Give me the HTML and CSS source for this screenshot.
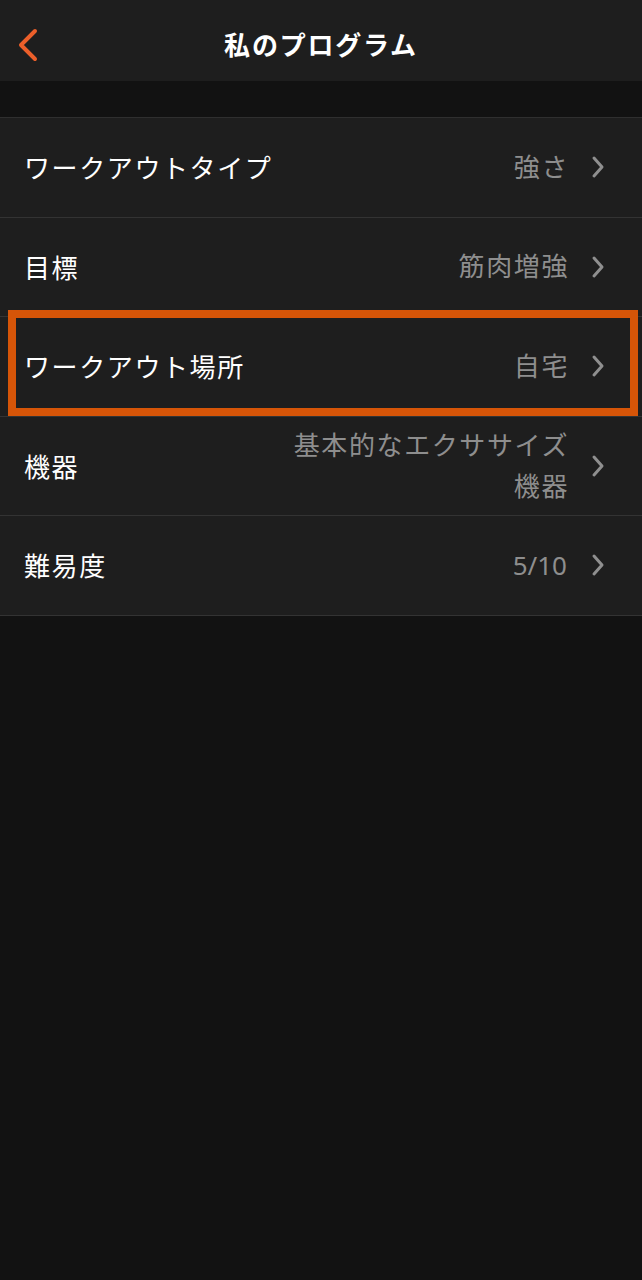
FILE: index.html
```html
<!DOCTYPE html>
<html lang="ja">
<head>
    <meta charset="UTF-8">
    <meta name="viewport" content="width=device-width, initial-scale=1.0">
    <title>私のプログラム</title>
    <link rel="stylesheet" href="styles.css">
</head>
<body>

    <header class="top-bar">
        <button class="back-btn" aria-label="戻る">
            <svg width="24" height="36" viewBox="0 0 24 36">
                <path d="M19 4 L5 18 L19 32" fill="none" stroke="#ec5f2a" stroke-width="4" stroke-linecap="round" stroke-linejoin="round"/>
            </svg>
        </button>
        <h1>私のプログラム</h1>
    </header>

    <div class="spacer"></div>

    <!-- Settings list -->
    <ul class="settings-list">
        <li class="row">
            <span class="label">ワークアウトタイプ</span>
            <span class="value">強さ</span>
            <svg class="chevron" width="14" height="24" viewBox="0 0 14 24"><path d="M3 3 L11 12 L3 21" fill="none" stroke="#8f8f8f" stroke-width="3" stroke-linecap="round" stroke-linejoin="round"/></svg>
        </li>
        <li class="row">
            <span class="label">目標</span>
            <span class="value">筋肉増強</span>
            <svg class="chevron" width="14" height="24" viewBox="0 0 14 24"><path d="M3 3 L11 12 L3 21" fill="none" stroke="#8f8f8f" stroke-width="3" stroke-linecap="round" stroke-linejoin="round"/></svg>
        </li>
        <li class="row highlighted">
            <span class="label">ワークアウト場所</span>
            <span class="value">自宅</span>
            <svg class="chevron" width="14" height="24" viewBox="0 0 14 24"><path d="M3 3 L11 12 L3 21" fill="none" stroke="#8f8f8f" stroke-width="3" stroke-linecap="round" stroke-linejoin="round"/></svg>
        </li>
        <li class="row">
            <span class="label">機器</span>
            <span class="value">基本的なエクササイズ<br>機器</span>
            <svg class="chevron" width="14" height="24" viewBox="0 0 14 24"><path d="M3 3 L11 12 L3 21" fill="none" stroke="#8f8f8f" stroke-width="3" stroke-linecap="round" stroke-linejoin="round"/></svg>
        </li>
        <li class="row">
            <span class="label">難易度</span>
            <span class="value numeric">5/10</span>
            <svg class="chevron" width="14" height="24" viewBox="0 0 14 24"><path d="M3 3 L11 12 L3 21" fill="none" stroke="#8f8f8f" stroke-width="3" stroke-linecap="round" stroke-linejoin="round"/></svg>
        </li>
    </ul>

</body>
</html>
```

FILE: styles.css
```css
/* Basic Reset */
* {
    margin: 0;
    padding: 0;
    box-sizing: border-box;
}

body {
    font-family: "Noto Sans", "Noto Sans CJK JP", sans-serif;
    background: #121212;
    color: #fff;
    width: 642px;
    height: 1280px;
}

/* Header */
.top-bar {
    height: 81px;
    background: #1e1e1e;
    display: flex;
    align-items: center;
    justify-content: center;
    position: relative;
}

.top-bar h1 {
    font-size: 26px;
    font-weight: 700;
    letter-spacing: 1.8px;
    margin-top: 6px;
}

.back-btn {
    position: absolute;
    left: 16px;
    top: 27px;
    background: none;
    border: none;
    display: flex;
}

.spacer {
    height: 36px;
}

/* List */
.settings-list {
    list-style: none;
    background: #1e1e1e;
    border-top: 1px solid #2f2f2f;
}

.row {
    height: 99.5px;
    display: flex;
    align-items: center;
    padding: 0 37px 0 24px;
    border-bottom: 1px solid #333;
    position: relative;
}

.label {
    font-size: 26px;
    flex: 1;
    letter-spacing: 1.6px;
}

.value {
    font-size: 26px;
    color: #8e8e8e;
    text-align: right;
    line-height: 41px;
    margin-right: 22px;
    letter-spacing: 1.6px;
}

.value.numeric {
    letter-spacing: 0;
    margin-right: 24px;
}

.chevron {
    flex-shrink: 0;
}

/* Orange highlight frame */
.highlighted::after {
    content: "";
    position: absolute;
    left: 8px;
    right: 4px;
    top: -7px;
    bottom: 0;
    border: 8px solid #d65508;
}
```
